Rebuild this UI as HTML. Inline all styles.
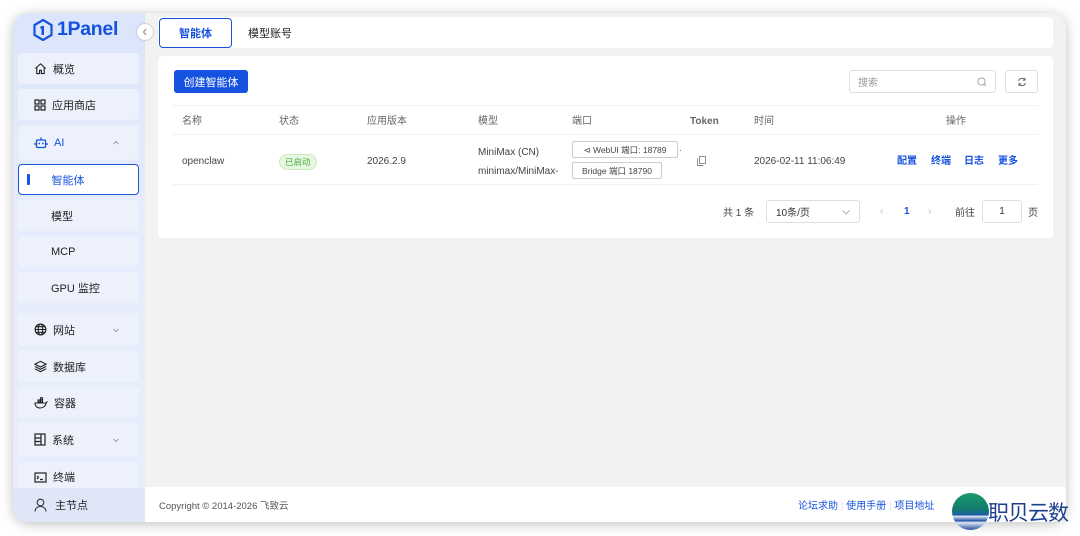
<!DOCTYPE html>
<html><head><meta charset="utf-8"><style>
*{box-sizing:border-box;margin:0;padding:0}
body{width:1080px;height:536px;background:#fff;font-family:"Liberation Sans","Noto Sans CJK SC",sans-serif;position:relative;overflow:hidden;color:#333}
.win{position:absolute;left:13px;top:13px;width:1053px;height:509px;border-radius:16px;overflow:hidden;background:#f2f2f3;box-shadow:0 2px 12px rgba(0,0,0,.25)}
.side{position:absolute;left:0;top:0;width:132px;height:509px;background:linear-gradient(180deg,#dbe5fb 0%,#e6ecfb 40%,#e8edfb 100%)}
.item{position:absolute;left:5px;width:121px;height:31px;background:#edf1fc;border-radius:4px;font-size:11px;color:#222;display:flex;align-items:center;padding-left:16px}
.item svg{margin-right:6px}
.item .chev{position:absolute;right:14px;top:50%;transform:translateY(-50%);width:6px;height:6px}
.sub{padding-left:33px}
.act{background:#fff;border:1.5px solid #1a56db;color:#1a56db;padding-left:8px}
.foot{position:absolute;left:132px;top:474px;width:921px;height:35px;background:#fff;font-size:9.5px;color:#555;display:flex;align-items:center;padding-left:14px}
.tabs{position:absolute;left:145px;top:4px;width:895px;height:31px;background:#fff;border-radius:4px}
.tab{position:absolute;top:1px;height:30px;font-size:11px;display:flex;align-items:center;justify-content:center}
.card{position:absolute;left:145px;top:43px;width:895px;height:182px;background:#fff;border-radius:4px}
.btn{position:absolute;left:16px;top:14px;width:74px;height:23px;background:#1552e0;color:#fff;font-size:11px;border-radius:3px;display:flex;align-items:center;justify-content:center}
.th{position:absolute;top:49px;left:15px;width:865px;height:30px;border-top:1px solid #eef0f5;border-bottom:1px solid #eef0f5;font-size:10px;color:#666}
.th span,.tr span{position:absolute;top:calc(50% + 2px);transform:translateY(-50%);line-height:12px}
.tr{position:absolute;top:79px;left:15px;width:865px;height:50px;border-bottom:1px solid #eef0f5;font-size:10px;color:#444}
.port{position:absolute;left:399px;width:106px;height:17px;border:1px solid #ccc;border-radius:2px;font-size:8.5px;display:flex;align-items:center;justify-content:center;color:#444}
.lnk{color:#1552e0;font-weight:bold}
.pg{position:absolute;top:144px;height:23px;font-size:10px;color:#444;display:flex;align-items:center}
.box{position:absolute;border:1px solid #dcdfe6;border-radius:3px;display:flex;align-items:center}
</style></head><body>
<div class="win">
 <div class="side">
  <div style="position:absolute;left:20px;top:5px;display:flex;align-items:center;font-weight:bold;font-size:19.5px;color:#1552e0;letter-spacing:-.3px">
   <svg width="20" height="22" viewBox="0 0 20 22"><path d="M10 1 L18.5 6 V16 L10 21 L1.5 16 V6Z" fill="none" stroke="#1552e0" stroke-width="2.2"/><path d="M8 7h3v9h-2.5v-6.5H7z" fill="#1552e0"/></svg>
   <span style="margin-left:4px">1Panel</span></div>
  <div class="item" style="top:40px"><svg width="13" height="13" viewBox="0 0 14 14"><path d="M1.5 7L7 2l5.5 5M3 6v6.5h3V9h2v3.5h3V6" fill="none" stroke="#222" stroke-width="1.2"/></svg>概览</div>
  <div class="item" style="top:76px"><svg width="12" height="12" viewBox="0 0 12 12"><g fill="none" stroke="#222" stroke-width="1.2"><rect x="1" y="1" width="4" height="4"/><rect x="7" y="1" width="4" height="4"/><rect x="1" y="7" width="4" height="4"/><rect x="7" y="7" width="4" height="4"/></g></svg>应用商店</div>
  <div class="item" style="top:112px;height:35px;color:#1552e0"><svg width="14" height="13" viewBox="0 0 14 13"><g fill="none" stroke="#1552e0" stroke-width="1.3"><rect x="2.5" y="4" width="9" height="7.5" rx="1"/><path d="M7 4V1.5M1 7v2M13 7v2"/></g><circle cx="5.2" cy="7.5" r=".9" fill="#1552e0"/><circle cx="8.8" cy="7.5" r=".9" fill="#1552e0"/></svg>AI<svg class="chev" viewBox="0 0 6 6"><path d="M.5 4L3 1.5 5.5 4" fill="none" stroke="#888" stroke-width=".8"/></svg></div>
  <div class="item act" style="top:151px"><span style="width:2.5px;height:11px;background:#1552e0;margin-right:22px;border-radius:1px"></span>智能体</div>
  <div class="item sub" style="top:187px">模型</div>
  <div class="item sub" style="top:223px">MCP</div>
  <div class="item sub" style="top:259px">GPU 监控</div>
  <div class="item" style="top:300px;height:33px"><svg width="13" height="13" viewBox="0 0 14 14"><g fill="none" stroke="#222" stroke-width="1.2"><circle cx="7" cy="7" r="5.8"/><ellipse cx="7" cy="7" rx="2.5" ry="5.8"/><path d="M1.2 7h11.6M2 4h10M2 10h10"/></g></svg>网站<svg class="chev" viewBox="0 0 6 6"><path d="M.5 2L3 4.5 5.5 2" fill="none" stroke="#888" stroke-width=".8"/></svg></div>
  <div class="item" style="top:338px"><svg width="13" height="13" viewBox="0 0 14 14"><g fill="none" stroke="#222" stroke-width="1.2"><path d="M7 1.5L13 4.5 7 7.5 1 4.5Z"/><path d="M1 7l6 3 6-3M1 9.5l6 3 6-3"/></g></svg>数据库</div>
  <div class="item" style="top:374px"><svg width="14" height="12" viewBox="0 0 14 12"><g fill="none" stroke="#222" stroke-width="1.1"><path d="M1 6h11c0 3-3 5-6 5S1 9 1 6zM12 6l1.5-1.5"/><rect x="4" y="3" width="2" height="2"/><rect x="6.5" y="3" width="2" height="2"/><rect x="6.5" y=".8" width="2" height="2"/></g></svg>容器</div>
  <div class="item" style="top:410px;height:33px"><svg width="12" height="13" viewBox="0 0 12 13"><g fill="none" stroke="#222" stroke-width="1.2"><rect x="1" y="1" width="10" height="11"/><path d="M1 5h6M1 8.5h6M7 1v11"/></g></svg>系统<svg class="chev" viewBox="0 0 6 6"><path d="M.5 2L3 4.5 5.5 2" fill="none" stroke="#888" stroke-width=".8"/></svg></div>
  <div class="item" style="top:449px;height:30px"><svg width="13" height="11" viewBox="0 0 13 11"><g fill="none" stroke="#222" stroke-width="1.2"><rect x="1" y="1" width="11" height="9"/><path d="M3 4l1.5 1.5L3 7M6 7.5h3"/></g></svg>终端</div>
  <div style="position:absolute;left:0;top:475px;width:132px;height:34px;background:#dfe6f8;display:flex;align-items:center;padding-left:21px;font-size:11px;color:#222"><svg width="13" height="14" viewBox="0 0 13 14" style="margin-right:8px"><g fill="none" stroke="#333" stroke-width="1.1"><circle cx="6.5" cy="4.5" r="3.3"/><path d="M1 13.5c0-3 2.5-5 5.5-5s5.5 2 5.5 5"/></g></svg>主节点</div>
 </div>
 <div style="position:absolute;left:124px;top:11px;width:16px;height:16px;border-radius:50%;background:#fff;box-shadow:0 0 2px rgba(0,0,0,.3);display:flex;align-items:center;justify-content:center"><svg width="6" height="8" viewBox="0 0 6 8"><path d="M4 1L1.5 4 4 7" fill="none" stroke="#888" stroke-width="1"/></svg></div>
 <div class="tabs">
  <div class="tab" style="left:1px;width:73px;border:1.5px solid #1552e0;border-radius:4px;color:#1552e0;font-weight:bold">智能体</div>
  <div class="tab" style="left:80px;width:64px;color:#222">模型账号</div>
 </div>
 <div class="card">
  <div class="btn">创建智能体</div>
  <div class="box" style="left:691px;top:14px;width:147px;height:23px;font-size:10px;color:#999;padding-left:8px">搜索<svg style="position:absolute;right:8px;top:6px" width="10" height="10" viewBox="0 0 10 10"><circle cx="4.5" cy="4.5" r="3.6" fill="none" stroke="#999" stroke-width=".9"/><path d="M7.2 7.2L9 9" stroke="#999" stroke-width=".9"/></svg></div>
  <div class="box" style="left:847px;top:14px;width:33px;height:23px;justify-content:center"><svg width="10" height="10" viewBox="0 0 10 10"><g fill="none" stroke="#555" stroke-width=".9"><path d="M1.5 4A3.6 3.6 0 0 1 8 3"/><path d="M8.5 6A3.6 3.6 0 0 1 2 7"/><path d="M8 1v2.2H5.8M2 9V6.8h2.2"/></g></svg></div>
  <div class="th"><span style="left:9px">名称</span><span style="left:106px">状态</span><span style="left:194px">应用版本</span><span style="left:305px">模型</span><span style="left:399px">端口</span><span style="left:517px;font-weight:bold">Token</span><span style="left:581px">时间</span><span style="left:773px">操作</span></div>
  <div class="tr"><span style="left:9px">openclaw</span><span style="left:106px;background:#e6f7e1;color:#4bae3a;border:1px solid #c9ecbf;border-radius:8px;padding:1px 5px;font-size:8.5px">已启动</span><span style="left:194px">2026.2.9</span>
   <span style="left:305px;line-height:19px">MiniMax (CN)<br>minimax/MiniMax-</span>
   <div class="port" style="top:6px">⊲ WebUI 端口: 18789</div><div style="position:absolute;left:506px;top:8px;font-size:9px">.</div>
   <div class="port" style="top:27px;width:90px">Bridge 端口 18790</div>
   <svg style="position:absolute;left:524px;top:21px" width="9" height="10" viewBox="0 0 9 10"><g fill="none" stroke="#888" stroke-width=".9"><rect x="2.5" y=".5" width="6" height="7"/><path d="M.5 2.5v7h6"/></g></svg>
   <span style="left:581px">2026-02-11 11:06:49</span>
   <span style="left:724px" class="lnk">配置</span><span style="left:758px" class="lnk">终端</span><span style="left:791px" class="lnk">日志</span><span style="left:825px" class="lnk">更多</span></div>
  <div class="pg" style="left:565px">共 1 条</div>
  <div class="box" style="left:608px;top:144px;width:94px;height:23px;font-size:10px;padding-left:9px">10条/页<svg style="position:absolute;right:9px;top:9px" width="8" height="5" viewBox="0 0 8 5"><path d="M.5.5L4 4 7.5.5" fill="none" stroke="#aaa" stroke-width=".9"/></svg></div>
  <div class="pg" style="left:722px;color:#bbb">‹</div>
  <div class="pg" style="left:746px;color:#1552e0;font-weight:bold">1</div>
  <div class="pg" style="left:770px;color:#bbb">›</div>
  <div class="pg" style="left:797px">前往</div>
  <div class="box" style="left:824px;top:144px;width:40px;height:23px;font-size:10px;justify-content:center">1</div>
  <div class="pg" style="left:870px">页</div>
 </div>
 <div class="foot">Copyright © 2014-2026 飞致云
  <span style="position:absolute;left:653px;color:#1552e0;font-size:10px">论坛求助 <span style="color:#ddd">|</span> 使用手册 <span style="color:#ddd">|</span> 项目地址</span></div>
</div>
<div style="position:absolute;left:952px;top:493px;width:37px;height:37px;border-radius:50%;background:linear-gradient(180deg,#1a9a6a 0%,#127a6e 45%,#1f5fa8 60%,#e8eef8 62%,#2a5aa8 75%,#dfe8f5 80%,#224e9a 100%)"></div>
<div style="position:absolute;left:988px;top:497px;font-size:21px;color:#1e3f8f;font-family:'Noto Sans CJK SC',sans-serif;letter-spacing:-1px">职贝云数</div>
</body></html>
